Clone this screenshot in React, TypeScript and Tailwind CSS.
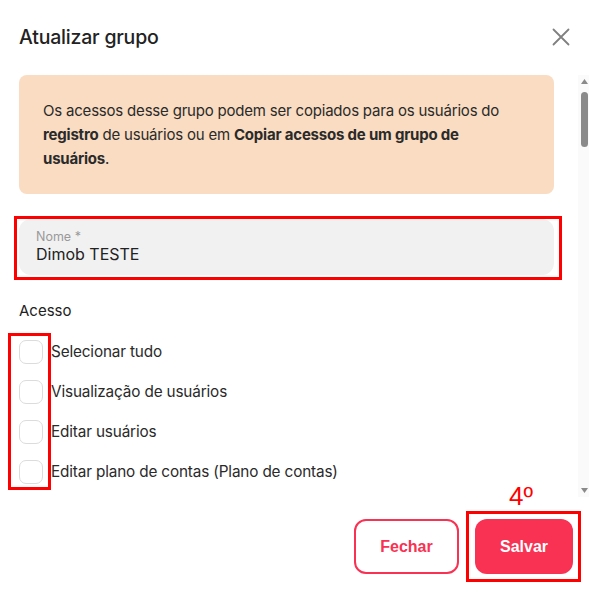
import React from "react";

const items = [
  "Selecionar tudo",
  "Visualização de usuários",
  "Editar usuários",
  "Editar plano de contas (Plano de contas)",
];

export default function App() {
  return (
    <div className="relative w-[589px] h-[593px] bg-white overflow-hidden font-['Inter','Noto_Sans',sans-serif] text-[#222]">
      {/* Header */}
      <div className="flex items-center justify-between h-[75px] pl-[19px] pr-[19px]">
        <h1 className="text-[19.5px] font-medium tracking-[-0.2px] text-[#222] leading-none">Atualizar grupo</h1>
        <svg width="18" height="18" viewBox="0 0 18 18" className="mt-[-2px]">
          <path d="M1.5 1.5 L16.5 16.5 M16.5 1.5 L1.5 16.5" stroke="#808080" strokeWidth="1.8" strokeLinecap="round" />
        </svg>
      </div>

      {/* Body */}
      <div className="flex h-[422px]">
        <div className="flex-1 pl-[19px] pr-[24px] overflow-hidden">
          <div className="rounded-lg bg-[#f9dcc1] pl-[24px] pr-[42px] pt-[24px] pb-[23px] text-[15px] leading-[24px] text-[#2a2a2a] tracking-[-0.2px]">
            <p>
              Os acessos desse grupo podem ser copiados para os usuários do{" "}
              <span className="font-bold">registro</span> de usuários ou em{" "}
              <span className="font-bold">Copiar acessos de um grupo de usuários</span>.
            </p>
          </div>

          <div className="mt-[25px] h-[56px] rounded-xl bg-[#f1f1f1] pl-[17px] pt-[10px] flex flex-col">
            <span className="text-[12.5px] leading-[15px] text-[#999]">Nome *</span>
            <span className="text-[16px] leading-[22px] text-[#222] mt-[-1px]">Dimob TESTE</span>
          </div>

          <div className="mt-[26px] text-[15px] leading-[20px] text-[#222]">Acesso</div>

          <div className="mt-[11px] flex flex-col">
            {items.map((t) => (
              <div key={t} className="flex items-center gap-[8px] h-[40px]">
                <span className="w-[24px] h-[24px] rounded-[7px] border border-[#dcdcdc] bg-white" />
                <span className="text-[15.3px] text-[#2a2a2a] tracking-[-0.15px]">{t}</span>
              </div>
            ))}
          </div>
        </div>

        {/* Scrollbar */}
        <div className="w-[11px] bg-[#fafafa] flex flex-col items-center pt-[4px] pb-[4px]">
          <svg width="7" height="5" viewBox="0 0 7 5" className="ml-[1px]">
            <path d="M3.5 0 L7 5 L0 5 Z" fill="#8a8a8a" />
          </svg>
          <div className="mt-[8px] ml-[1px] w-[7px] h-[55px] rounded-full bg-[#8a8a8a]" />
          <div className="flex-1" />
          <svg width="7" height="5" viewBox="0 0 7 5" className="ml-[1px]">
            <path d="M0 0 L7 0 L3.5 5 Z" fill="#8a8a8a" />
          </svg>
        </div>
      </div>

      {/* Footer */}
      <div className="flex justify-end gap-[16px] pr-[16px] pt-[22px] font-['Liberation_Sans',Arial,sans-serif]">
        <button className="w-[105px] h-[55px] rounded-[12px] border-2 border-[#f93153] bg-white text-[#f93153] text-[16px] font-bold">
          Fechar
        </button>
        <button className="w-[98px] h-[55px] rounded-[12px] bg-[#f93153] text-white text-[16px] font-bold">
          Salvar
        </button>
      </div>

      {/* Annotations */}
      <div className="absolute left-[14px] top-[216px] w-[548px] h-[64px] border-[3px] border-[#ff0000]" />
      <div className="absolute left-[8px] top-[333px] w-[43px] h-[157px] border-[3px] border-[#ff0000]" />
      <div className="absolute left-[466px] top-[511px] w-[115px] h-[71px] border-[3px] border-[#ff0000]" />
      <div className="absolute left-[509px] top-[481px] text-[26px] leading-[30px] text-[#ff0000] font-['Liberation_Sans',Arial,sans-serif]">
        4º
      </div>
    </div>
  );
}
